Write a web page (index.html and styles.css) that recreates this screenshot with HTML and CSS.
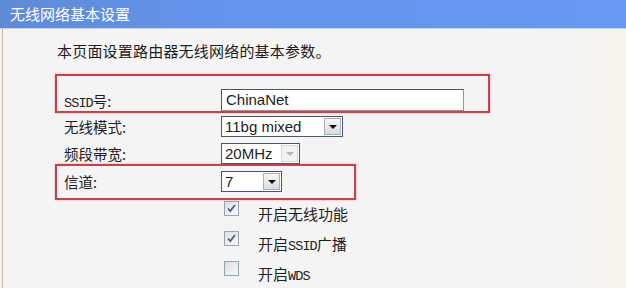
FILE: index.html
```html
<!DOCTYPE html>
<html>
<head>
<meta charset="utf-8">
<link rel="stylesheet" href="styles.css">
</head>
<body>
<div class="header">无线网络基本设置</div>
<div class="page">
  <div class="intro">本页面设置路由器无线网络的基本参数。</div>
  <div class="form">
    <div class="box box-wide">
      <div class="row row-tight">
        <span class="label"><span class="mono">SSID</span>号:</span>
        <span class="input">ChinaNet</span>
      </div>
    </div>
    <div class="row row-mode">
      <span class="label">无线模式:</span>
      <span class="select sel-mode"><span class="sel-text">11bg mixed</span><span class="sel-btn"><span class="tri"></span></span></span>
    </div>
    <div class="row row-band">
      <span class="label">频段带宽:</span>
      <span class="select sel-band"><span class="sel-text">20MHz</span><span class="sel-btn disabled"><span class="tri"></span></span></span>
    </div>
    <div class="box box-narrow">
      <div class="row row-chan">
        <span class="label">信道:</span>
        <span class="select sel-chan"><span class="sel-text">7</span><span class="sel-btn"><span class="tri"></span></span></span>
      </div>
    </div>
    <div class="checks">
      <div class="check-row">
        <span class="cb"><svg width="11" height="11" viewBox="0 0 11 11"><path d="M2 5.5 L4.3 8 L9 2" fill="none" stroke="#4b5a8c" stroke-width="1.8"/></svg></span>
        <span class="cb-label">开启无线功能</span>
      </div>
      <div class="check-row">
        <span class="cb"><svg width="11" height="11" viewBox="0 0 11 11"><path d="M2 5.5 L4.3 8 L9 2" fill="none" stroke="#4b5a8c" stroke-width="1.8"/></svg></span>
        <span class="cb-label">开启<span class="mono">SSID</span>广播</span>
      </div>
      <div class="check-row">
        <span class="cb"></span>
        <span class="cb-label">开启<span class="mono">WDS</span></span>
      </div>
    </div>
  </div>
</div>
</body>
</html>
```

FILE: styles.css
```css
html, body {
  margin: 0;
  padding: 0;
  background: #f4f4f4;
  font-family: "Noto Sans CJK SC", "Noto Sans", sans-serif;
  color: #1e1e1e;
  overflow: hidden;
}

.header {
  height: 28px;
  line-height: 27px;
  padding-left: 10px;
  color: #fff;
  font-size: 15px;
  background: linear-gradient(to right, #5e8ad6 0%, #6494ea 30%, #6699f5 100%);
  border-bottom: 1px solid #c4d4ee;
}

.page {
  margin-left: 2px;
  border-left: 1px solid #cdb9a8;
  height: 270px;
  background: linear-gradient(to right, #f4f4f4 90%, #f8f5ee 100%);
}

.intro {
  padding-top: 12px;
  padding-left: 54px;
  font-size: 15px;
  letter-spacing: 0.2px;
  line-height: 20px;
}

.form {
  margin-left: 52px;
  margin-top: 13px;
}

.box {
  border: 2px solid #c2444c;
  box-shadow: 0 0 2px rgba(210, 80, 90, 0.55);
}

.box-wide {
  width: 431px;
  padding-top: 13px;
}

.box-narrow {
  width: 297px;
  padding-top: 5px;
  padding-bottom: 6px;
}

.row {
  display: flex;
  align-items: center;
  padding-left: 9px;
  font-size: 14.5px;
}

.box .row {
  padding-left: 7px;
}

.label {
  width: 157px;
  flex: none;
}

.mono {
  font-family: "Liberation Mono", "DejaVu Sans Mono", monospace;
  font-size: 13.5px;
  letter-spacing: -0.9px;
}

.row-tight { height: 22px; }
.row-mode { height: 21px; margin-top: 3px; }
.row-band { height: 21px; margin-top: 6px; }
.row-chan { height: 21px; }

.input {
  box-sizing: border-box;
  width: 243px;
  height: 22px;
  border: 1px solid #4a5566;
  border-right-color: #8c96a4;
  border-bottom-color: #8c96a4;
  background: #fff;
  font-family: "Liberation Sans", Arial, sans-serif;
  font-size: 15px;
  line-height: 20px;
  padding-left: 4px;
  color: #222;
}

.select {
  box-sizing: border-box;
  display: flex;
  align-items: stretch;
  height: 21px;
  border: 1px solid #4a5566;
  background: #fff;
  font-family: "Liberation Sans", Arial, sans-serif;
  font-size: 15px;
  line-height: 19px;
  color: #222;
}

.sel-text {
  flex: 1;
  padding-left: 3px;
}

.sel-mode { width: 122px; }
.sel-band { width: 79px; }
.sel-chan { width: 61px; }

.sel-btn {
  width: 17px;
  margin: 1px 1px 1px 0;
  box-sizing: border-box;
  border: 1px solid #a8b0bc;
  background: linear-gradient(#f6f6f6, #d9dbde);
  display: flex;
  align-items: center;
  justify-content: center;
}

.tri {
  width: 0;
  height: 0;
  border-left: 4px solid transparent;
  border-right: 4px solid transparent;
  border-top: 4px solid #111;
  margin-top: 1px;
}

.sel-btn.disabled {
  border-color: #d4d8dc;
  background: #f2f2f2;
}

.sel-btn.disabled .tri {
  border-top-color: #b4b8bc;
}

.checks {
  margin-left: 169px;
  margin-top: 1px;
}

.check-row {
  display: flex;
  align-items: flex-start;
  height: 30px;
}

.cb {
  box-sizing: border-box;
  width: 15px;
  height: 15px;
  border: 1px solid #9aa4b0;
  background: linear-gradient(135deg, #dcdfe3, #f8f8f8);
  display: flex;
  align-items: center;
  justify-content: center;
  flex: none;
}

.cb-label {
  margin-left: 19px;
  font-size: 15px;
  line-height: 16px;
  padding-top: 5px;
}
```
